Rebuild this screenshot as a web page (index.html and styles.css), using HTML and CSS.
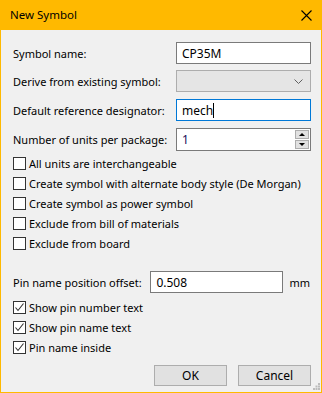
FILE: index.html
```html
<!DOCTYPE html>
<html lang="en">
<head>
    <meta charset="UTF-8">
    <meta name="viewport" content="width=device-width, initial-scale=1.0">
    <title>New Symbol</title>
    <link rel="stylesheet" href="styles.css">
</head>
<body>
    <div class="window">
        <div class="titlebar">
            <span class="title">New Symbol</span>
            <svg class="close" width="11" height="11" viewBox="0 0 11 11">
                <path d="M0.5 0.5 L10.5 10.5 M10.5 0.5 L0.5 10.5" stroke="#000" stroke-width="1.1" fill="none"/>
            </svg>
        </div>
        <div class="content">
            <div class="field-row">
                <label class="label">Symbol name:</label>
                <div class="input">CP35M</div>
            </div>
            <div class="field-row">
                <label class="label">Derive from existing symbol:</label>
                <div class="combo">
                    <svg width="9" height="5" viewBox="0 0 9 5">
                        <path d="M0.5 0.5 L4.5 4.5 L8.5 0.5" stroke="#606060" fill="none"/>
                    </svg>
                </div>
            </div>
            <div class="field-row">
                <label class="label">Default reference designator:</label>
                <div class="input focused"><span class="caret">mech</span></div>
            </div>
            <div class="field-row last">
                <label class="label">Number of units per package:</label>
                <div class="input spin">
                    <span class="spin-value">1</span>
                    <div class="spin-buttons">
                        <div class="spin-btn"><span class="arrow up"></span></div>
                        <div class="spin-btn"><span class="arrow down"></span></div>
                    </div>
                </div>
            </div>

            <div class="checks">
                <div class="check"><span class="box"></span>All units are interchangeable</div>
                <div class="check"><span class="box"></span>Create symbol with alternate body style (De Morgan)</div>
                <div class="check"><span class="box"></span>Create symbol as power symbol</div>
                <div class="check"><span class="box"></span>Exclude from bill of materials</div>
                <div class="check"><span class="box"></span>Exclude from board</div>
            </div>

            <div class="offset-row">
                <label class="label">Pin name position offset:</label>
                <div class="input offset">0.508</div>
                <span class="unit">mm</span>
            </div>

            <div class="checks checked-list">
                <div class="check"><span class="box checked"><svg width="11" height="11" viewBox="0 0 11 11"><path d="M1.5 5.5 L4 8.5 L9.5 1.5" stroke="#333" stroke-width="1.1" fill="none"/></svg></span>Show pin number text</div>
                <div class="check"><span class="box checked"><svg width="11" height="11" viewBox="0 0 11 11"><path d="M1.5 5.5 L4 8.5 L9.5 1.5" stroke="#333" stroke-width="1.1" fill="none"/></svg></span>Show pin name text</div>
                <div class="check"><span class="box checked"><svg width="11" height="11" viewBox="0 0 11 11"><path d="M1.5 5.5 L4 8.5 L9.5 1.5" stroke="#333" stroke-width="1.1" fill="none"/></svg></span>Pin name inside</div>
            </div>

            <div class="buttons">
                <button class="btn">OK</button>
                <button class="btn">Cancel</button>
            </div>
            <svg class="grip" width="7" height="7" viewBox="0 0 7 7">
                <rect x="5" y="0" width="2" height="2" fill="#bcbcbc"/>
                <rect x="2.5" y="2.5" width="2" height="2" fill="#bcbcbc"/>
                <rect x="5" y="2.5" width="2" height="2" fill="#bcbcbc"/>
                <rect x="0" y="5" width="2" height="2" fill="#bcbcbc"/>
                <rect x="2.5" y="5" width="2" height="2" fill="#bcbcbc"/>
                <rect x="5" y="5" width="2" height="2" fill="#bcbcbc"/>
            </svg>
        </div>
    </div>
</body>
</html>
```

FILE: styles.css
```css
body {
    margin: 0;
    padding: 0;
    font-family: "Noto Sans", "Open Sans", sans-serif;
    font-size: 11px;
    color: #000;
    background: #f0f0f0;
    white-space: nowrap;
}
.window {
    width: 322px;
    height: 393px;
    box-sizing: border-box;
    border: 1px solid #ffb900;
    border-top: none;
    display: flex;
    flex-direction: column;
    background: #f0f0f0;
}
.titlebar {
    height: 30px;
    margin: 0 -1px;
    background: #ffb900;
    display: flex;
    align-items: center;
    justify-content: space-between;
    padding: 0 10px 0 10px;
    flex-shrink: 0;
}
.title {
    font-size: 11.5px;
    margin-top: -1px;
}
.content {
    position: relative;
    flex: 1;
    padding: 12px 10px 0 11px;
}
.field-row {
    display: flex;
    align-items: center;
    height: 22px;
    margin-bottom: 7px;
}
.field-row:first-child {
    margin-bottom: 6px;
}
.field-row.last {
    margin-bottom: 3px;
}
.label {
    width: 163px;
    padding-left: 1px;
    flex-shrink: 0;
}
.input {
    flex: 1;
    height: 22px;
    box-sizing: border-box;
    border: 1px solid #7a7a7a;
    background: #fff;
    padding: 0 5px;
    display: flex;
    align-items: center;
    font-size: 12px;
}
.input.focused {
    border-color: #0078d7;
}
.caret {
    border-right: 1px solid #000;
    line-height: 15px;
}
.combo {
    flex: 1;
    height: 22px;
    box-sizing: border-box;
    border: 1px solid #adadad;
    background: #e5e5e5;
    display: flex;
    align-items: center;
    justify-content: flex-end;
    padding-right: 7px;
}
.spin {
    height: 23px;
    padding-right: 1px;
    justify-content: space-between;
}
.spin-value {
    color: #1a0f5a;
}
.spin-buttons {
    display: flex;
    flex-direction: column;
    gap: 1px;
}
.spin-btn {
    width: 14px;
    height: 9px;
    box-sizing: border-box;
    border: 1px solid #adadad;
    background: #e1e1e1;
    display: flex;
    align-items: center;
    justify-content: center;
}
.arrow {
    width: 0;
    height: 0;
    border-left: 3px solid transparent;
    border-right: 3px solid transparent;
}
.arrow.up {
    border-bottom: 3px solid #000;
}
.arrow.down {
    border-top: 3px solid #000;
}
.check {
    display: flex;
    align-items: center;
    height: 20px;
}
.box {
    width: 13px;
    height: 13px;
    box-sizing: border-box;
    border: 1px solid #333;
    background: #fff;
    margin-left: 1px;
    margin-right: 3px;
    display: flex;
    align-items: center;
    justify-content: center;
    flex-shrink: 0;
}
.offset-row {
    display: flex;
    align-items: center;
    height: 22px;
    margin-top: 18px;
    margin-bottom: 4px;
}
.offset-row .label {
    width: auto;
}
.input.offset {
    flex: none;
    width: 133px;
    margin-left: auto;
}
.unit {
    margin-left: 6px;
    margin-right: 1px;
}
.buttons {
    display: flex;
    justify-content: flex-end;
    gap: 11px;
    margin-top: 8px;
}
.btn {
    font-family: inherit;
    font-size: 12px;
    height: 21px;
    width: 73px;
    border: 1px solid #adadad;
    background: #e1e1e1;
    color: #000;
    padding: 0;
}
.grip {
    position: absolute;
    right: 1px;
    bottom: 2px;
}
```
